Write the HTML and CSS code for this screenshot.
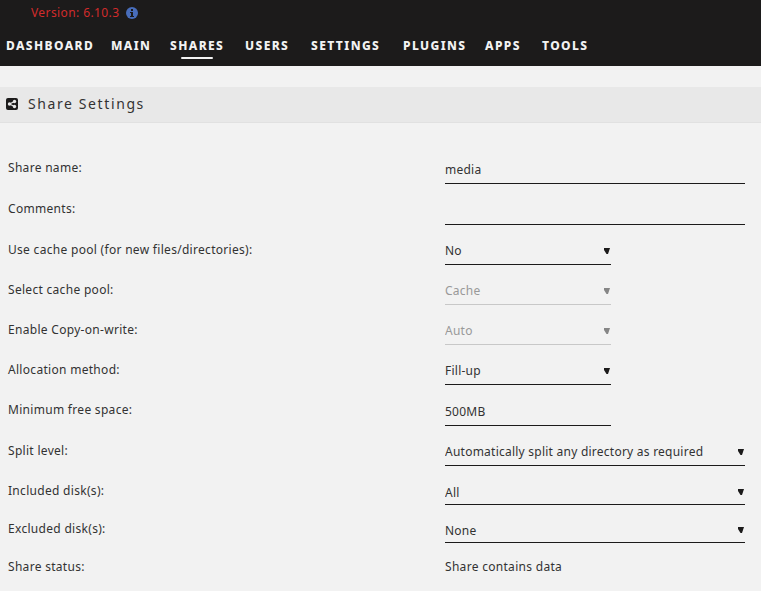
FILE: index.html
```
<!DOCTYPE html>
<html lang="en">
<head>
  <meta charset="utf-8">
  <title>Share Settings</title>
  <link rel="stylesheet" href="styles.css">
</head>
<body>
  <header class="header">
    <div class="version">
      <span>Version: 6.10.3</span>
      <svg class="info-icon" viewBox="0 0 12 12">
        <circle cx="6" cy="6" r="6" fill="#486dba"/>
        <path d="M5 2h2v2H5zM4 5h3v4h1v1H4V9h1V6H4z" fill="#1c1b1b"/>
      </svg>
    </div>
    <nav class="menu">
      <a class="menu-item">DASHBOARD</a>
      <a class="menu-item">MAIN</a>
      <a class="menu-item active">SHARES</a>
      <a class="menu-item">USERS</a>
      <a class="menu-item">SETTINGS</a>
      <a class="menu-item">PLUGINS</a>
      <a class="menu-item">APPS</a>
      <a class="menu-item">TOOLS</a>
    </nav>
  </header>

  <div class="title">
    <svg class="share-icon" viewBox="0 0 12 12">
      <rect width="12" height="12" rx="2" fill="#1c1b1b"/>
      <path d="M8.5 3.5L3.5 6l5 2.5" fill="none" stroke="#e8e8e8" stroke-width="1.2"/>
      <circle cx="8.500" cy="3.500" r="1.700" fill="#e8e8e8"/>
      <circle cx="3.500" cy="6" r="1.700" fill="#e8e8e8"/>
      <circle cx="8.500" cy="8.500" r="1.700" fill="#e8e8e8"/>
    </svg>
    <h1>Share Settings</h1>
  </div>

  <form class="settings">
    <div class="row row-input">
      <label>Share name:</label>
      <div class="field wide"><input type="text" value="media"></div>
    </div>
    <div class="row row-input">
      <label>Comments:</label>
      <div class="field wide"><input type="text" value=""></div>
    </div>
    <div class="row">
      <label>Use cache pool (for new files/directories):</label>
      <div class="field">
        <select><option>No</option></select>
        <svg class="arrow" viewBox="0 0 6 6"><path d="M0 0h6L4 6H2.500L0 2z"/></svg>
      </div>
    </div>
    <div class="row">
      <label>Select cache pool:</label>
      <div class="field disabled">
        <select disabled><option>Cache</option></select>
        <svg class="arrow" viewBox="0 0 6 6"><path d="M0 0h6L4 6H2.500L0 2z"/></svg>
      </div>
    </div>
    <div class="row">
      <label>Enable Copy-on-write:</label>
      <div class="field disabled">
        <select disabled><option>Auto</option></select>
        <svg class="arrow" viewBox="0 0 6 6"><path d="M0 0h6L4 6H2.500L0 2z"/></svg>
      </div>
    </div>
    <div class="row">
      <label>Allocation method:</label>
      <div class="field">
        <select><option>Fill-up</option></select>
        <svg class="arrow" viewBox="0 0 6 6"><path d="M0 0h6L4 6H2.500L0 2z"/></svg>
      </div>
    </div>
    <div class="row row-input">
      <label>Minimum free space:</label>
      <div class="field"><input type="text" value="500MB"></div>
    </div>
    <div class="row">
      <label>Split level:</label>
      <div class="field wide">
        <select><option>Automatically split any directory as required</option></select>
        <svg class="arrow" viewBox="0 0 6 6"><path d="M0 0h6L4 6H2.500L0 2z"/></svg>
      </div>
    </div>
    <div class="row row-disks">
      <label>Included disk(s):</label>
      <div class="field wide">
        <select><option>All</option></select>
        <svg class="arrow" viewBox="0 0 6 6"><path d="M0 0h6L4 6H2.500L0 2z"/></svg>
      </div>
    </div>
    <div class="row row-disks">
      <label>Excluded disk(s):</label>
      <div class="field wide">
        <select><option>None</option></select>
        <svg class="arrow" viewBox="0 0 6 6"><path d="M0 0h6L4 6H2.500L0 2z"/></svg>
      </div>
    </div>
    <div class="row row-status">
      <label>Share status:</label>
      <span>Share contains data</span>
    </div>
  </form>
</body>
</html>
```
FILE: styles.css
```
* {
  box-sizing: border-box;
}

body {
  margin: 0;
  height: 591px;
  overflow: hidden;
  background-color: #f2f2f2;
  color: #333232;
  font-family: "Noto Sans", "Open Sans", sans-serif;
  font-size: 12px;
  line-height: 20px;
  letter-spacing: 0.3px;
}

.header {
  height: 66px;
  background-color: #1c1b1b;
}

.version {
  display: flex;
  align-items: center;
  gap: 7px;
  height: 25px;
  padding-left: 31px;
  color: #d22b2b;
  letter-spacing: 0.4px;
}

.info-icon {
  width: 12px;
  height: 12px;
}

.menu {
  display: grid;
  grid-template-columns: 105px 59px 75px 66px 92px 82px 57px auto;
  justify-content: start;
  padding: 11px 0 0 6px;
}

.menu-item {
  display: flex;
  flex-direction: column;
  justify-self: start;
  align-items: center;
  color: #f2f2f2;
  font-size: 12px;
  font-weight: 800;
  letter-spacing: 1.4px;
}

.active::after {
  content: "";
  width: 32px;
  height: 2px;
  margin-top: 1px;
  border-radius: 1px;
  background-color: #f2f2f2;
}

.title {
  display: flex;
  align-items: center;
  gap: 10px;
  height: 36px;
  margin-top: 21px;
  padding: 0 0 1px 6px;
  background-color: #e8e8e8;
  border-bottom: 1px solid #e1e1e1;
}

.title h1 {
  margin: 0;
  font-size: 14px;
  font-weight: normal;
  letter-spacing: 1.6px;
}

.share-icon {
  width: 12px;
  height: 12px;
}

.settings {
  padding: 35px 0 0 8px;
}

.row {
  display: flex;
  align-items: flex-start;
  height: 40px;
}

.row label {
  width: 437px;
}

.field {
  position: relative;
  width: 166px;
  height: 25px;
  border-bottom: 1px solid #1c1b1b;
}

.wide {
  width: 300px;
}

.field input,
.field select {
  display: block;
  width: 100%;
  height: 22px;
  margin: 0;
  padding: 0;
  border: 0;
  outline: 0;
  appearance: none;
  background: transparent;
  color: #333232;
  font: inherit;
  letter-spacing: 0.24px;
  opacity: 1;
}

.field input {
  height: 21px;
  padding-top: 1px;
}

.disabled {
  border-color: #c8c8c8;
}

.field.disabled select {
  color: #999;
}

.arrow {
  position: absolute;
  top: 8px;
  right: 1px;
  width: 6px;
  height: 6px;
  fill: #1c1b1b;
}

.disabled .arrow {
  fill: #868686;
}

.row-input {
  height: 41px;
}

.row-input .field {
  height: 26px;
}

.row-disks {
  height: 38px;
}

.row-disks .field {
  height: 24px;
}

.row-disks .field select {
  height: 23px;
  padding-top: 1px;
}
```
